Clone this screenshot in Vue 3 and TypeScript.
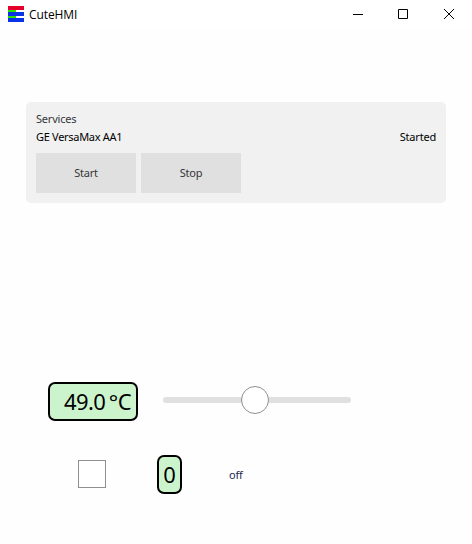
<script setup lang="ts">
import { ref } from 'vue'

const title = 'CuteHMI'
const service = ref({ name: 'GE VersaMax AA1', status: 'Started' })
const temperature = ref('49.0 °C')
const count = ref(0)
const output = ref('off')
</script>

<template>
  <div class="window">
    <header class="titlebar">
      <svg class="logo" width="16" height="16" viewBox="0 0 16 16" shape-rendering="crispEdges">
        <path d="M0 0h16v4H0z" fill="#e4002b" />
        <path d="M0 4h8v8H0z" fill="#26e000" />
        <path d="M0 6h16v4H0zM0 12h16v4H0z" fill="#0a32e6" />
      </svg>
      <span class="title">{{ title }}</span>
      <div class="controls">
        <svg width="45" height="28" viewBox="0 0 45 28"><path d="M17 14.5h10" /></svg>
        <svg width="45" height="28" viewBox="0 0 45 28"><path d="M17.5 9.5h9v9h-9z" /></svg>
        <svg width="45" height="28" viewBox="0 0 45 28"><path d="M18 9l10 10M28 9l-10 10" /></svg>
      </div>
    </header>

    <section class="services">
      <div class="heading">Services</div>
      <div class="row">
        <span class="name">{{ service.name }}</span>
        <span>{{ service.status }}</span>
      </div>
      <div class="buttons">
        <button type="button">Start</button>
        <button type="button">Stop</button>
      </div>
    </section>

    <div class="analog">
      <div class="display temp">{{ temperature }}</div>
      <div class="slider"><div class="handle"></div></div>
    </div>

    <div class="digital">
      <div class="checkbox"></div>
      <div class="display count">{{ count }}</div>
      <span class="output">{{ output }}</span>
    </div>
  </div>
</template>

<style>
body {
  background: #fefefe;
}
</style>

<style scoped>
.window {
  width: 472px;
  height: 544px;
  overflow: hidden;
  background: #fefefe;
  color: #000;
  font-family: 'Noto Sans', 'Open Sans', sans-serif;
  font-size: 11px;
  letter-spacing: -0.2px;
}
.titlebar {
  display: flex;
  box-sizing: border-box;
  height: 30px;
  background: #fff;
  padding: 0 1px 0 8px;
}
.logo {
  margin-top: 6px;
}
.title {
  margin-left: 5px;
  font-family: 'Open Sans', sans-serif;
  font-size: 12px;
  line-height: 29px;
  letter-spacing: -0.1px;
}
.controls {
  display: flex;
  margin-left: auto;
}
.controls svg {
  fill: none;
  stroke: #000;
  stroke-width: 1;
}
.services {
  box-sizing: border-box;
  width: 420px;
  height: 101px;
  margin: 72px 0 0 26px;
  padding: 8px 10px;
  border-radius: 5px;
  background: #f1f1f1;
}
.heading,
.row {
  display: flex;
  justify-content: space-between;
  height: 18px;
  line-height: 17px;
  white-space: nowrap;
}
.heading {
  color: #353637;
}
.name {
  letter-spacing: -0.3px;
}
.buttons {
  display: flex;
  gap: 5px;
  margin-top: 7px;
}
button {
  width: 100px;
  height: 40px;
  padding: 0 0 1px;
  border: 0;
  background: #e0e0e0;
  color: #353637;
  font: inherit;
  letter-spacing: inherit;
}
.analog {
  display: flex;
  align-items: center;
  margin: 179px 0 0 48px;
}
.display {
  box-sizing: border-box;
  height: 39px;
  border: 2px solid #000;
  border-radius: 7px;
  background: #ccf4cc;
  font-size: 22px;
  line-height: 35px;
  letter-spacing: 0;
  white-space: nowrap;
}
.temp {
  width: 90px;
  padding-right: 5px;
  text-align: right;
  letter-spacing: -0.6px;
  word-spacing: -1.5px;
}
.slider {
  width: 188px;
  height: 6px;
  margin-left: 25px;
  margin-top: -3px;
  border-radius: 3px;
  background: #e0e0e0;
}
.handle {
  box-sizing: border-box;
  width: 28px;
  height: 28px;
  margin: -11px 0 0 78.4px;
  border: 1px solid #909090;
  border-radius: 50%;
  background: #fff;
}
.digital {
  display: flex;
  align-items: center;
  margin: 34px 0 0 78px;
}
.checkbox {
  box-sizing: border-box;
  width: 28px;
  height: 28px;
  margin-top: -1px;
  border: 1px solid #909090;
  background: #fff;
}
.count {
  width: 25px;
  margin-left: 51px;
  text-align: center;
}
.output {
  margin-left: 47px;
  color: #26284f;
}
</style>
